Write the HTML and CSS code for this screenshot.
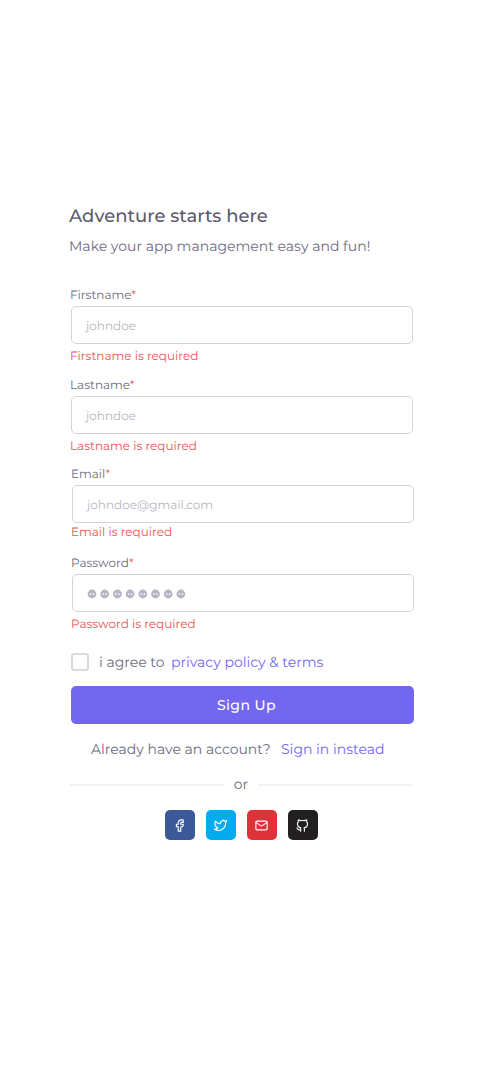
FILE: index.html
```html
<!DOCTYPE html>
<html lang="en">
<head>
<meta charset="utf-8">
<meta name="viewport" content="width=device-width, initial-scale=1">
<title>Sign Up</title>
<link rel="stylesheet" href="styles.css">
</head>
<body>
<main class="signup">
  <h1 class="title">Adventure starts here</h1>
  <p class="subtitle">Make your app management easy and fun!</p>
  <form class="form">
    <div class="field">
      <label class="label">Firstname<b class="star">*</b></label>
      <div class="input">johndoe</div>
      <p class="error">Firstname is required</p>
    </div>
    <div class="field">
      <label class="label">Lastname<b class="star">*</b></label>
      <div class="input">johndoe</div>
      <p class="error">Lastname is required</p>
    </div>
    <div class="field field-email">
      <label class="label">Email<b class="star">*</b></label>
      <div class="input">johndoe@gmail.com</div>
      <p class="error">Email is required</p>
    </div>
    <div class="field field-password">
      <label class="label">Password<b class="star">*</b></label>
      <div class="input">
        <svg class="dots" width="100" height="10" viewBox="0 0 100 10">
          <defs><g id="dot"><circle cx="5" cy="5" r="4.4" fill="#b7b4c3"/><circle cx="3.5" cy="5" r=".9" fill="#f2f1f5"/><circle cx="6.5" cy="5" r=".9" fill="#f2f1f5"/></g></defs>
          <use href="#dot"/><use href="#dot" x="12.7"/><use href="#dot" x="25.4"/><use href="#dot" x="38.1"/><use href="#dot" x="50.8"/><use href="#dot" x="63.5"/><use href="#dot" x="76.2"/><use href="#dot" x="88.9"/>
        </svg>
      </div>
      <p class="error">Password is required</p>
    </div>
    <div class="agree">
      <i class="checkbox"></i>
      <span class="agree-text">i agree to</span>
      <a class="link">privacy policy &amp; terms</a>
    </div>
    <button class="submit" type="button">Sign Up</button>
  </form>
  <p class="signin"><span class="have">Already have an account?</span><a class="link">Sign in instead</a></p>
  <div class="divider"><span class="or">or</span></div>
  <div class="social">
    <a class="facebook"><svg viewBox="0 0 24 24"><path d="M7 10v4h3v7h4v-7h3l1-4h-4V8a1 1 0 0 1 1-1h3V3h-3a5 5 0 0 0-5 5v2z"/></svg></a>
    <a class="twitter"><svg viewBox="0 0 24 24"><path d="M22 4.01c-1 .49-1.98.689-3 .99-1.121-1.265-2.783-1.335-4.38-.737S11.977 6.323 12 8v1c-3.245.083-6.135-1.395-8-4 0 0-4.182 7.433 4 11-1.872 1.247-3.739 2.088-6 2 3.308 1.803 6.913 2.423 10.034 1.517 3.58-1.04 6.522-3.723 7.651-7.742a13.84 13.84 0 0 0 .497-3.753C20.18 7.773 21.692 5.25 22 4.009z"/></svg></a>
    <a class="mail"><svg viewBox="0 0 24 24"><rect x="3" y="5" width="18" height="14" rx="2"/><path d="m3 7 9 6 9-6"/></svg></a>
    <a class="github"><svg viewBox="0 0 24 24"><path d="M9 19c-4.3 1.4-4.3-2.5-6-3m12 5v-3.5c0-1 .1-1.4-.5-2 2.8-.3 5.5-1.4 5.5-6a4.6 4.6 0 0 0-1.3-3.2 4.2 4.2 0 0 0-.1-3.2s-1.1-.3-3.5 1.3a12.3 12.3 0 0 0-6.2 0C6.5 2.8 5.4 3.1 5.4 3.1a4.2 4.2 0 0 0-.1 3.2A4.6 4.6 0 0 0 4 9.500c0 4.600 2.700 5.700 5.500 6-.6.6-.6 1.200-.5 2V21"/></svg></a>
  </div>
</main>
</body>
</html>
```

FILE: styles.css
```css
* { box-sizing: border-box; margin: 0; padding: 0; }
body { background: #fff; color: #6f6b7d; font-family: Montserrat, Inter, sans-serif; text-rendering: geometricPrecision; }
.signup { display: flex; flex-direction: column; width: 345px; margin-left: 69px; padding-top: 204px; }
.title { font-size: 18px; font-weight: 500; line-height: 24px; letter-spacing: .02px; color: #5d596c; }
.subtitle { margin-top: 8px; font-size: 14px; line-height: 20px; }
.form { margin-top: 29px; }
.field { width: 343px; height: 81px; margin: 0 0 9px 1px; font-size: 12px; line-height: 22px; }
.label { display: block; height: 20px; }
.star { font-weight: 400; color: #ea5455; }
.input { display: flex; align-items: center; width: 342px; height: 38px; margin: 1px 0 2px 1px; padding: 4px 0 0 14px; border: 1px solid #d3d1dc; border-radius: 5px; color: #b7b5be; }
.error { color: #ea5455; }
.field-email { height: 78px; margin: -1px 0 11px 2px; }
.field-email .input { margin-bottom: -1px; }
.field-password { margin: 0 0 18px 2px; }
.field-password .input { padding-top: 2px; }
.agree { display: flex; align-items: center; height: 20px; margin-left: 2px; font-size: 14px; }
.checkbox { width: 18px; height: 18px; margin-right: 10px; border: 2px solid #dbdade; border-radius: 3px; }
.agree-text { width: 72px; }
.link { color: #7367f0; }
.submit { display: block; width: 343px; height: 38px; margin: 14px 0 0 2px; padding-left: 8px; border: 0; border-radius: 5px; background: #7367f0; color: #fff; font: 500 14px/38px Montserrat, Inter, sans-serif; letter-spacing: .43px; text-rendering: inherit; }
.signin { display: flex; margin: 15px 0 0 22px; font-size: 14px; line-height: 20px; }
.have { width: 190px; }
.divider { display: flex; align-items: center; gap: 10px; width: 342px; height: 20px; margin: 16px 0 0 1px; font-size: 14px; }
.or { padding-bottom: 2px; }
.divider::before, .divider::after { content: ""; flex: 1; height: 2px; background: #f1f1f2; }
.social { display: flex; gap: 11px; margin: 15px 0 0 95.6px; }
.social a { display: grid; place-items: center; width: 30px; height: 30px; border-radius: 5px; }
.social svg { width: 15px; height: 15px; fill: none; stroke: #fff; stroke-width: 1.8; stroke-linecap: round; stroke-linejoin: round; }
.facebook { background: #3b5998; }
.twitter { background: #00acee; }
.mail { background: #dd3338; }
.github { background: #211f1f; }
```
